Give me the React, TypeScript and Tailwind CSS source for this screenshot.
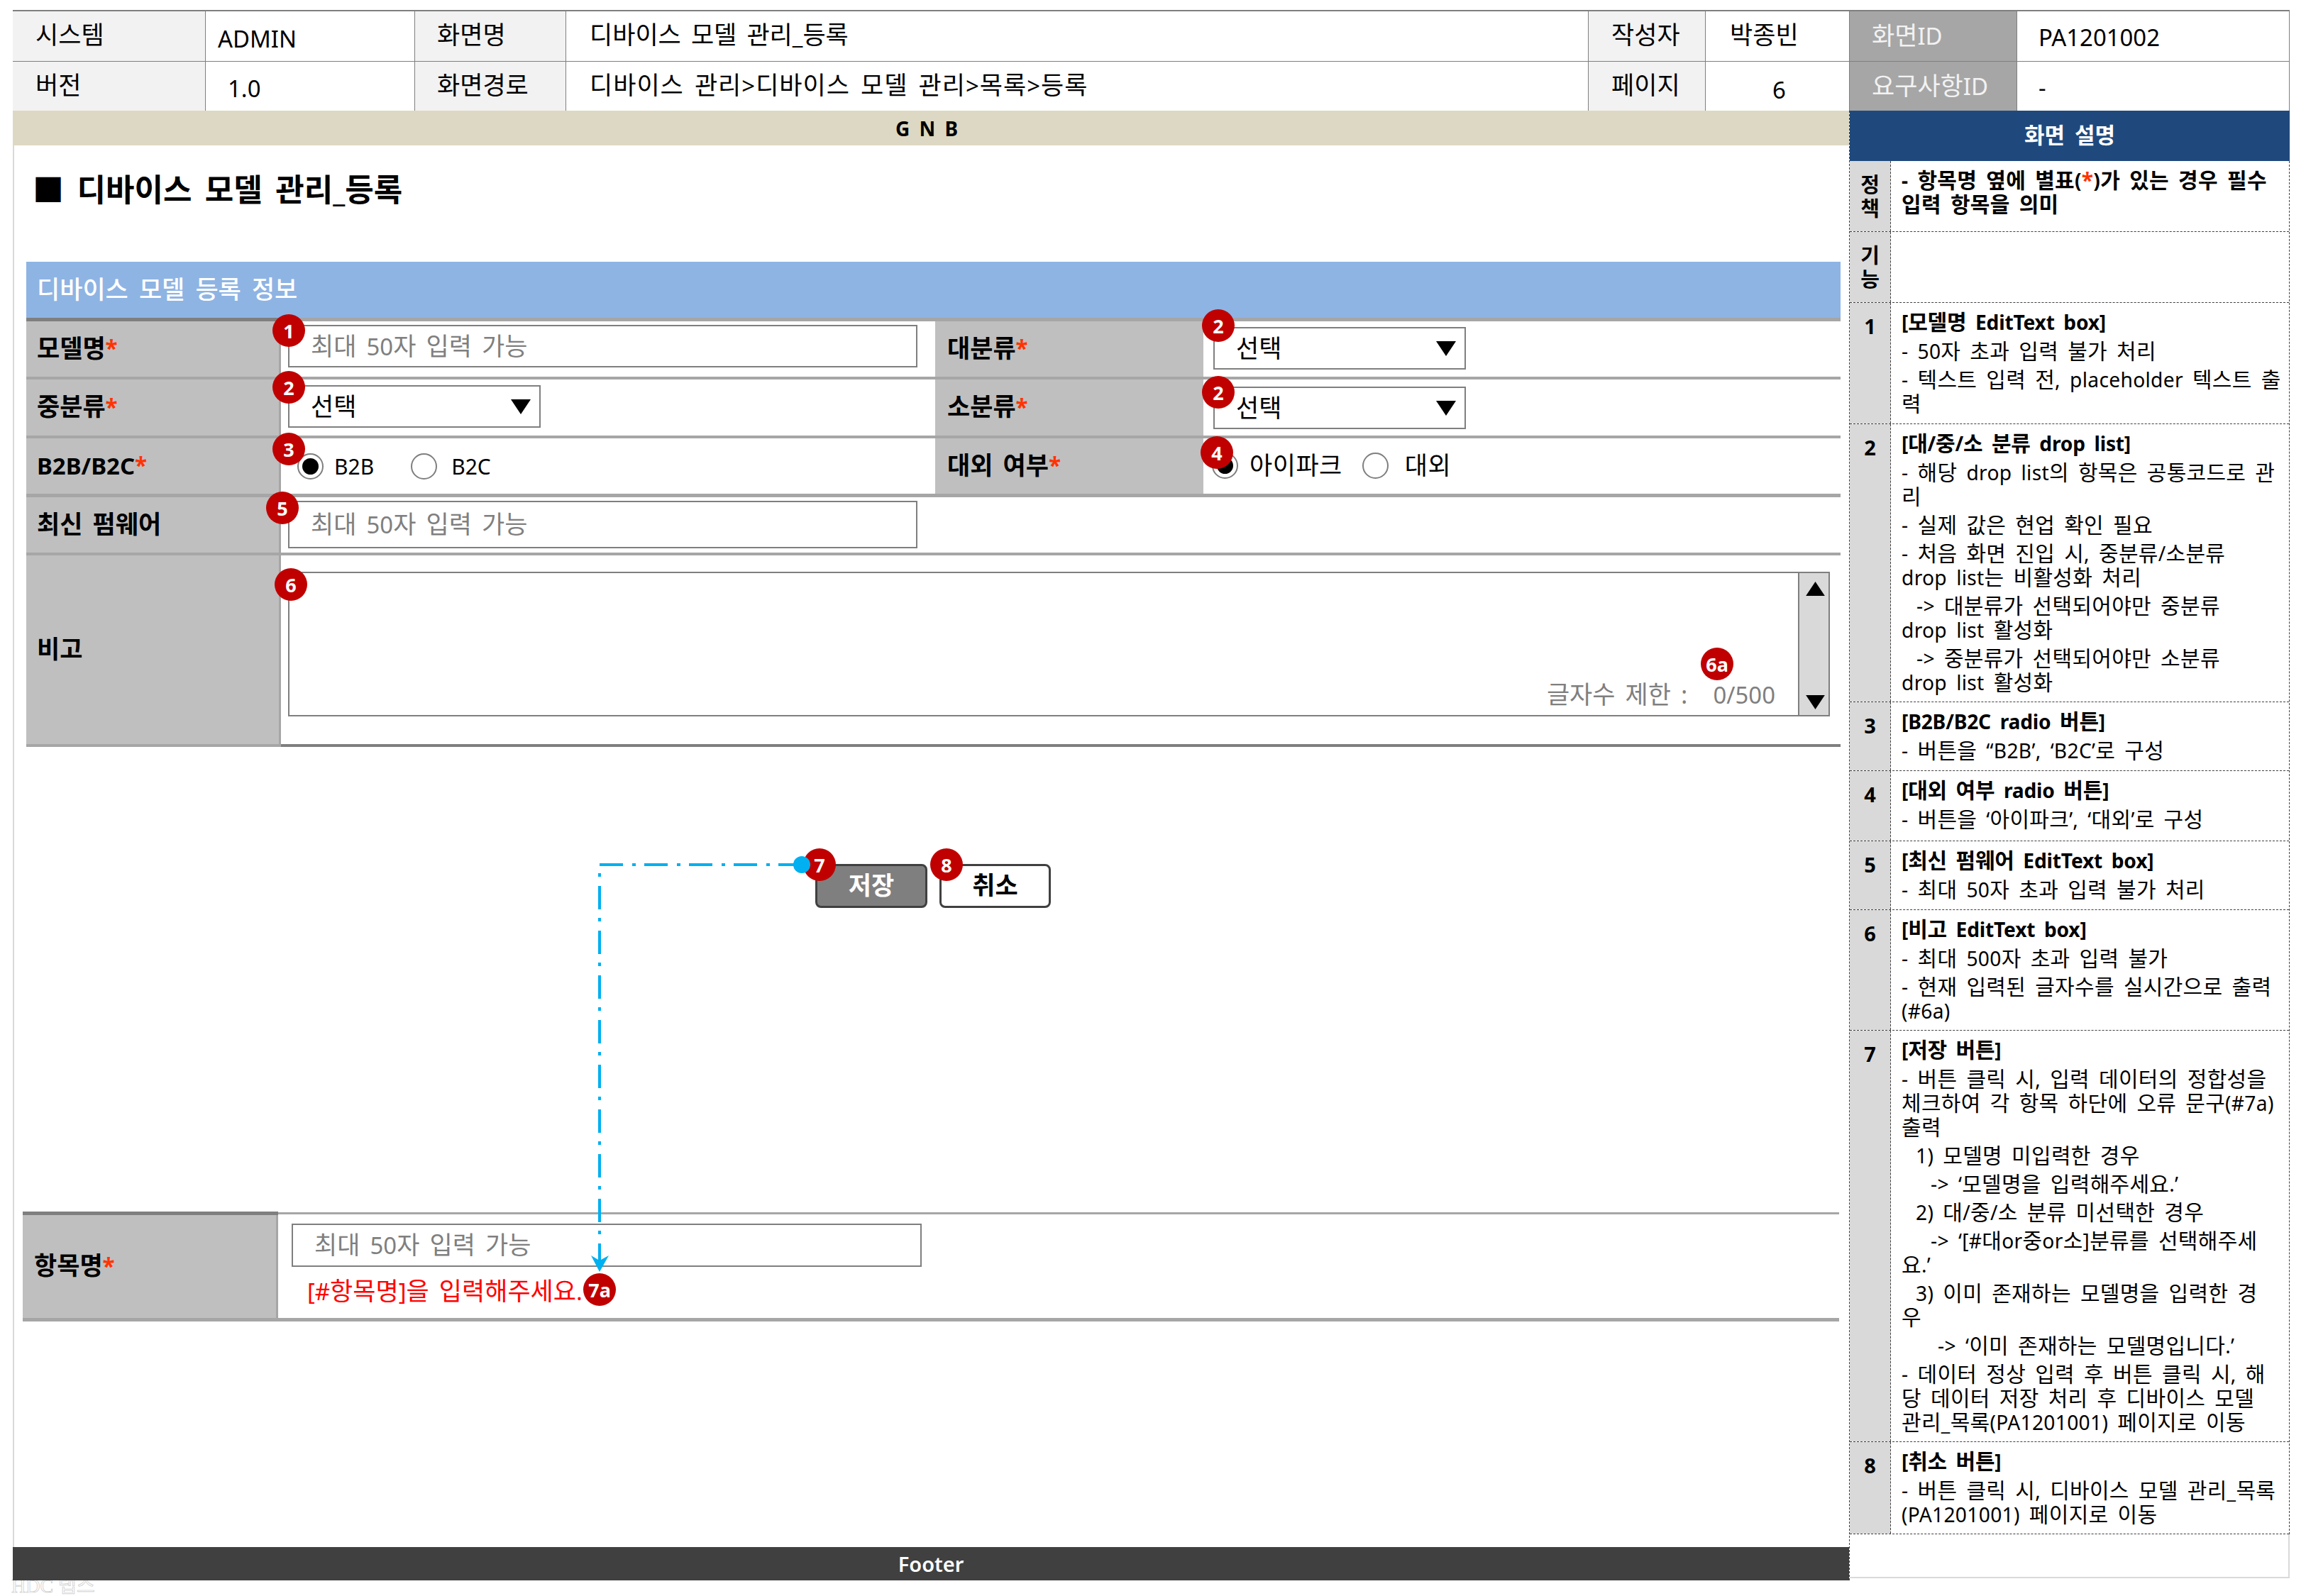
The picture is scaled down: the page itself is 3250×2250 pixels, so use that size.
import type { ReactNode } from 'react';

// ascii runs are set a bit smaller than hangul, the original font has wider hangul
function T({ s }: { s: string }) {
  return (
    <span>
      {s.split(/([\x21-\x7e\u2018\u2019]+)/).map((part, i) =>
        i % 2 === 1 ? (
          <span key={i} className="text-[0.94em]">
            {part}
          </span>
        ) : (
          part
        ),
      )}
    </span>
  );
}

function Star() {
  return <span className="text-[#ff3300] text-[0.9em]">*</span>;
}

function Badge({ label, className }: { label: string; className: string }) {
  return (
    <div
      className={`absolute w-[46px] h-[46px] rounded-full bg-[#c00000] text-white font-bold text-[27px] leading-none flex items-center justify-center ${className}`}
    >
      {label}
    </div>
  );
}

function HeadCell({ children, className = '' }: { children: ReactNode; className?: string }) {
  return (
    <div className={`flex items-center whitespace-nowrap border-r border-b border-[#7f7f7f] ${className}`}>
      {children}
    </div>
  );
}

function Label({ children, className = '' }: { children: ReactNode; className?: string }) {
  return (
    <div className={`flex items-center bg-[#bfbfbf] font-bold text-[35px] pb-[2px] whitespace-nowrap ${className}`}>
      {children}
    </div>
  );
}

function TextBox({ className = '' }: { className?: string }) {
  return (
    <div className={`flex items-center border-2 border-[#7f7f7f] bg-white pl-[30px] text-[35px] text-[#7f7f7f] whitespace-nowrap [word-spacing:5px] ${className}`}>
      <T s="최대 50자 입력 가능" />
    </div>
  );
}

function Caret({ up = false, className = '' }: { up?: boolean; className?: string }) {
  return (
    <svg viewBox="0 0 28 21" className={className}>
      <polygon points={up ? '14,0 28,21 0,21' : '0,0 28,0 14,21'} fill="#000" />
    </svg>
  );
}

function Select({ className = '' }: { className?: string }) {
  return (
    <div className={`flex items-center justify-between w-[356px] h-[60px] border-2 border-[#7f7f7f] bg-white pl-[30px] pr-[12px] text-[35px] ${className}`}>
      <span>선택</span>
      <Caret className="w-[28px] h-[21px]" />
    </div>
  );
}

function Radio({ on = false, className = '' }: { on?: boolean; className?: string }) {
  return (
    <div className={`flex items-center justify-center w-[37px] h-[37px] rounded-full border-2 border-[#7f7f7f] bg-white ${className}`}>
      {on && <div className="w-[23px] h-[23px] rounded-full bg-black" />}
    </div>
  );
}

function Line({ s, tight = false, className = '' }: { s: string; tight?: boolean; className?: string }) {
  return (
    <div className={`leading-[34px] whitespace-nowrap ${tight ? '' : 'mt-[6px]'} ${className}`}>
      <T s={s} />
    </div>
  );
}

function Title({ s }: { s: string }) {
  return (
    <div className="relative -top-[1px] font-bold tracking-[-0.2px] leading-[34px] whitespace-nowrap">
      <T s={s} />
    </div>
  );
}

function DescRow({ num, className, children }: { num: ReactNode; className: string; children?: ReactNode }) {
  return (
    <div className={`flex border-b border-dashed border-[#404040] ${className}`}>
      <div className="w-[58px] shrink-0 bg-[#d9d9d9] border-r border-dashed border-[#404040] pt-[16px] text-center font-bold text-[29px] leading-[34px]">
        {num}
      </div>
      <div className="flex-1 pl-[15px] pt-[11px] text-[30px] tracking-[0.3px] [word-spacing:5px]">{children}</div>
    </div>
  );
}

export default function App() {
  return (
    <div className="relative w-[3250px] h-[2250px] overflow-hidden bg-white text-black pt-[14px] pl-[18px] font-['Noto_Sans','Noto_Sans_CJK_KR',sans-serif] text-[35px]">
      <div className="absolute left-[16px] top-[2222px] font-['Liberation_Serif','Noto_Sans_CJK_KR',serif] text-[28px] leading-none text-white [-webkit-text-stroke:0.7px_#c8c8c8] whitespace-nowrap">
        HDC 랩스
      </div>

      {/* document info header */}
      <div className="flex w-[3209px] h-[142px]">
        <div className="grid w-[2589px] grid-cols-[272px_295px_213px_1441px_165px_203px] grid-rows-[71px_71px] border-t-2 border-[#7f7f7f] [word-spacing:5px]">
          <HeadCell className="bg-[#f2f2f2] pl-[32px] pb-[4px]">시스템</HeadCell>
          <HeadCell className="pl-[17px] pt-[6px]"><T s="ADMIN" /></HeadCell>
          <HeadCell className="bg-[#f2f2f2] pl-[31px] pb-[4px]">화면명</HeadCell>
          <HeadCell className="pl-[33px] pb-[4px]"><T s="디바이스 모델 관리_등록" /></HeadCell>
          <HeadCell className="bg-[#f2f2f2] pl-[32px] pb-[4px]">작성자</HeadCell>
          <HeadCell className="pl-[34px] pb-[4px]">박종빈</HeadCell>
          <HeadCell className="bg-[#f2f2f2] pl-[32px] pb-[4px]">버전</HeadCell>
          <HeadCell className="pl-[31px] pt-[4px]"><T s="1.0" /></HeadCell>
          <HeadCell className="bg-[#f2f2f2] pl-[31px] pb-[4px]">화면경로</HeadCell>
          <HeadCell className="pl-[33px] pb-[4px] tracking-[1px]"><T s="디바이스 관리>디바이스 모델 관리>목록>등록" /></HeadCell>
          <HeadCell className="bg-[#f2f2f2] pl-[32px] pb-[4px]">페이지</HeadCell>
          <HeadCell className="pl-[94px] pt-[8px]"><T s="6" /></HeadCell>
        </div>
        <div className="grid w-[620px] grid-cols-[236px_384px] grid-rows-[71px_71px] border-t-2 border-[#7f7f7f]">
          <HeadCell className="bg-[#a6a6a6] text-[#f2f2f2] pl-[31px] pb-[2px]"><T s="화면ID" /></HeadCell>
          <HeadCell className="pl-[30px] pt-[2px]"><T s="PA1201002" /></HeadCell>
          <HeadCell className="bg-[#a6a6a6] text-[#f2f2f2] pl-[31px] pb-[2px]"><T s="요구사항ID" /></HeadCell>
          <HeadCell className="pl-[30px] pt-[2px]"><T s="-" /></HeadCell>
        </div>
      </div>

      <div className="flex">
        <div className="w-[2588px] shrink-0">
          <div className="flex items-center justify-center h-[49px] bg-[#ddd8c3] font-bold text-[28px] [word-spacing:6px] pr-[12px]">
            G N B
          </div>

          <div className="h-[1976px] border-l-2 border-[#d9d9d9]">
            <div className="h-[164px] pl-[26px] pt-[32px] font-bold text-[44px] leading-[60px] whitespace-nowrap [word-spacing:7px]">
              ■ <T s="디바이스 모델 관리_등록" />
            </div>

            {/* registration form */}
            <div className="ml-[17px] w-[2557px]">
              <div className="flex items-center h-[79px] bg-[#8eb4e3] pl-[15px] text-white font-medium text-[35px] [word-spacing:6px]">
                디바이스 모델 등록 정보
              </div>
              <div className="flex h-[5px] bg-[#a6a6a6]">
                <div className="w-[359px] bg-[#7f7f7f]" />
              </div>

              <div className="flex h-[82px] border-b-[4px] border-[#a6a6a6]">
                <Label className="w-[359px] border-r-[3px] border-[#a6a6a6] pl-[15px]">모델명<Star /></Label>
                <div className="w-[922px] pl-[10px] pt-[5px]"><TextBox className="w-[887px] h-[60px]" /></div>
                <Label className="w-[378px] pl-[17px]">대분류<Star /></Label>
                <div className="pl-[14px] pt-[8px]"><Select /></div>
              </div>

              <div className="flex h-[83px] border-b-[4px] border-[#a6a6a6]">
                <Label className="w-[359px] border-r-[3px] border-[#a6a6a6] pl-[15px]">중분류<Star /></Label>
                <div className="w-[922px] pl-[10px] pt-[8px]"><Select /></div>
                <Label className="w-[378px] pl-[17px]">소분류<Star /></Label>
                <div className="pl-[14px] pt-[10px]"><Select /></div>
              </div>

              <div className="flex h-[83px] border-b-[5px] border-[#a6a6a6]">
                <Label className="w-[359px] border-r-[3px] border-[#a6a6a6] pl-[15px]"><T s="B2B/B2C" /><Star /></Label>
                <div className="flex items-center w-[922px] pl-[23px] text-[30px]">
                  <Radio on />
                  <span className="ml-[15px]">B2B</span>
                  <Radio className="ml-[52px]" />
                  <span className="ml-[20px]">B2C</span>
                </div>
                <Label className="w-[378px] pl-[17px] [word-spacing:5px]">대외 여부<Star /></Label>
                <div className="flex items-center pl-[12px] pb-[2px] text-[35px] tracking-[0.5px]">
                  <Radio on />
                  <span className="ml-[16px]">아이파크</span>
                  <Radio className="ml-[28px]" />
                  <span className="ml-[23px]">대외</span>
                </div>
              </div>

              <div className="flex h-[82px] border-b-[4px] border-[#a6a6a6]">
                <Label className="w-[359px] border-r-[3px] border-[#a6a6a6] pl-[15px] [word-spacing:5px]">최신 펌웨어</Label>
                <div className="w-[922px] pl-[10px] pt-[5px]"><TextBox className="w-[887px] h-[67px]" /></div>
              </div>

              <div className="flex h-[270px]">
                <Label className="w-[359px] border-r-[3px] border-b-[4px] border-[#a6a6a6] pl-[15px]">비고</Label>
                <div className="flex-1 pl-[10px] pt-[23px] border-b-[4px] border-[#7f7f7f]">
                  <div className="flex w-[2173px] h-[204px] border-2 border-[#7f7f7f] text-[#7f7f7f] text-[35px] whitespace-nowrap">
                    <div className="flex-1 flex items-end justify-end gap-[36px] pr-[32px] pb-[3px] [word-spacing:5px]">
                      <span>글자수 제한 :</span>
                      <T s="0/500" />
                    </div>
                    <div className="flex flex-col items-center justify-between w-[43px] pl-[4px] pt-[12px] pb-[8px] bg-[#d9d9d9] border-l-2 border-[#7f7f7f]">
                      <Caret up className="w-[27px] h-[20px]" />
                      <Caret className="w-[27px] h-[20px]" />
                    </div>
                  </div>
                </div>
              </div>
            </div>

            <div className="flex gap-[17px] ml-[1129px] mt-[165px] font-bold text-[35px]">
              <div className="flex items-center justify-center w-[158px] h-[62px] pb-[2px] rounded-[8px] border-[3px] border-[#404040] bg-[#7f7f7f] text-white">저장</div>
              <div className="flex items-center justify-center w-[157px] h-[62px] pb-[2px] rounded-[8px] border-[3px] border-[#404040] bg-white">취소</div>
            </div>

            {/* validation example */}
            <div className="ml-[12px] mt-[428px] w-[2560px]">
              <div className="flex items-center h-[5px]">
                <div className="w-[360px] h-[5px] bg-[#7f7f7f]" />
                <div className="flex-1 h-[3px] bg-[#a6a6a6]" />
              </div>
              <div className="flex h-[150px] border-b-[5px] border-[#a6a6a6]">
                <Label className="w-[360px] border-r-[3px] border-[#a6a6a6] pl-[16px]">항목명<Star /></Label>
                <div className="flex-1 pl-[19px] pt-[12px]">
                  <TextBox className="w-[888px] h-[61px]" />
                  <div className="pl-[22px] mt-[14px] text-[35px] leading-[40px] text-[#ff0000] whitespace-nowrap [word-spacing:5px]">
                    <T s="[#항목명]을 입력해주세요." />
                  </div>
                </div>
              </div>
            </div>
          </div>

          <div className="relative z-10 flex items-center justify-center h-[47px] bg-[#404040] text-white font-semibold text-[29px]">
            Footer
          </div>
        </div>

        {/* screen description panel */}
        <div className="w-[621px] border-l border-dashed border-[#404040]">
          <div className="flex items-center justify-center h-[71px] pb-[2px] bg-[#1f497d] text-white font-bold text-[31px] [word-spacing:6px]">
            화면 설명
          </div>
          <div className="border-r border-dashed border-[#404040]">
            <DescRow className="h-[100px] font-bold" num={<><div>정</div><div>책</div></>}>
              <div className="leading-[33px] whitespace-nowrap -mt-[1px]">
                <T s="- 항목명 옆에 별표(" /><span className="text-[#ff3300]">*</span><T s=")가 있는 경우 필수" />
              </div>
              <div className="leading-[33px] whitespace-nowrap">입력 항목을 의미</div>
            </DescRow>
            <DescRow className="h-[100px]" num={<><div>기</div><div>능</div></>} />
            <DescRow className="h-[171px]" num="1">
              <Title s="[모델명 EditText box]" />
              <Line s="- 50자 초과 입력 불가 처리" />
              <Line s="- 텍스트 입력 전, placeholder 텍스트 출" />
              <Line tight s="력" />
            </DescRow>
            <DescRow className="h-[392px]" num="2">
              <Title s="[대/중/소 분류 drop list]" />
              <Line s="- 해당 drop list의 항목은 공통코드로 관" />
              <Line tight s="리" />
              <Line s="- 실제 값은 현업 확인 필요" />
              <Line s="- 처음 화면 진입 시, 중분류/소분류" />
              <Line tight s="drop list는 비활성화 처리" />
              <Line className="pl-[21px]" s="-> 대분류가 선택되어야만 중분류" />
              <Line tight s="drop list 활성화" />
              <Line className="pl-[21px]" s="-> 중분류가 선택되어야만 소분류" />
              <Line tight s="drop list 활성화" />
            </DescRow>
            <DescRow className="h-[97px]" num="3">
              <Title s="[B2B/B2C radio 버튼]" />
              <Line s="- 버튼을 ‘‘B2B’, ‘B2C’로 구성" />
            </DescRow>
            <DescRow className="h-[99px]" num="4">
              <Title s="[대외 여부 radio 버튼]" />
              <Line s="- 버튼을 ‘아이파크’, ‘대외’로 구성" />
            </DescRow>
            <DescRow className="h-[97px]" num="5">
              <Title s="[최신 펌웨어 EditText box]" />
              <Line s="- 최대 50자 초과 입력 불가 처리" />
            </DescRow>
            <DescRow className="h-[170px]" num="6">
              <Title s="[비고 EditText box]" />
              <Line s="- 최대 500자 초과 입력 불가" />
              <Line s="- 현재 입력된 글자수를 실시간으로 출력" />
              <Line tight s="(#6a)" />
            </DescRow>
            <DescRow className="h-[580px]" num="7">
              <Title s="[저장 버튼]" />
              <Line s="- 버튼 클릭 시, 입력 데이터의 정합성을" />
              <Line tight s="체크하여 각 항목 하단에 오류 문구(#7a)" />
              <Line tight s="출력" />
              <Line className="pl-[20px]" s="1) 모델명 미입력한 경우" />
              <Line className="pl-[41px]" s="-> ‘모델명을 입력해주세요.’" />
              <Line className="pl-[20px]" s="2) 대/중/소 분류 미선택한 경우" />
              <Line className="pl-[41px]" s="-> ‘[#대or중or소]분류를 선택해주세" />
              <Line tight s="요.’" />
              <Line className="pl-[20px]" s="3) 이미 존재하는 모델명을 입력한 경" />
              <Line tight s="우" />
              <Line className="pl-[51px]" s="-> ‘이미 존재하는 모델명입니다.’" />
              <Line s="- 데이터 정상 입력 후 버튼 클릭 시, 해" />
              <Line tight s="당 데이터 저장 처리 후 디바이스 모델" />
              <Line tight s="관리_목록(PA1201001) 페이지로 이동" />
            </DescRow>
            <DescRow className="h-[130px]" num="8">
              <Title s="[취소 버튼]" />
              <Line s="- 버튼 클릭 시, 디바이스 모델 관리_목록" />
              <Line tight s="(PA1201001) 페이지로 이동" />
            </DescRow>
          </div>
          <div className="h-[62px] border-r-2 border-b-2 border-[#d9d9d9]" />
        </div>
      </div>

      {/* annotation markers */}
      <Badge label="1" className="left-[384px] top-[443px]" />
      <Badge label="2" className="left-[384px] top-[523px]" />
      <Badge label="3" className="left-[384px] top-[610px]" />
      <Badge label="5" className="left-[375px] top-[693px]" />
      <Badge label="6" className="left-[387px] top-[801px]" />
      <Badge label="2" className="left-[1694px] top-[436px]" />
      <Badge label="2" className="left-[1694px] top-[530px]" />
      <Badge label="4" className="left-[1692px] top-[615px]" />
      <Badge label="6a" className="left-[2397px] top-[913px]" />
      <Badge label="7" className="left-[1132px] top-[1196px]" />
      <Badge label="8" className="left-[1311px] top-[1196px]" />
      <Badge label="7a" className="left-[822px] top-[1795px]" />

      <svg viewBox="0 0 3250 2250" className="absolute left-0 top-0 w-[3250px] h-[2250px] pointer-events-none">
        <path d="M1130 1219H845V1780" fill="none" stroke="#00b0f0" strokeWidth="4" strokeDasharray="33 12 5 13" />
        <circle cx="1130" cy="1219" r="12" fill="#00b0f0" />
        <polygon points="845,1793 833,1770 845,1777 858,1770" fill="#00b0f0" />
      </svg>
    </div>
  );
}
